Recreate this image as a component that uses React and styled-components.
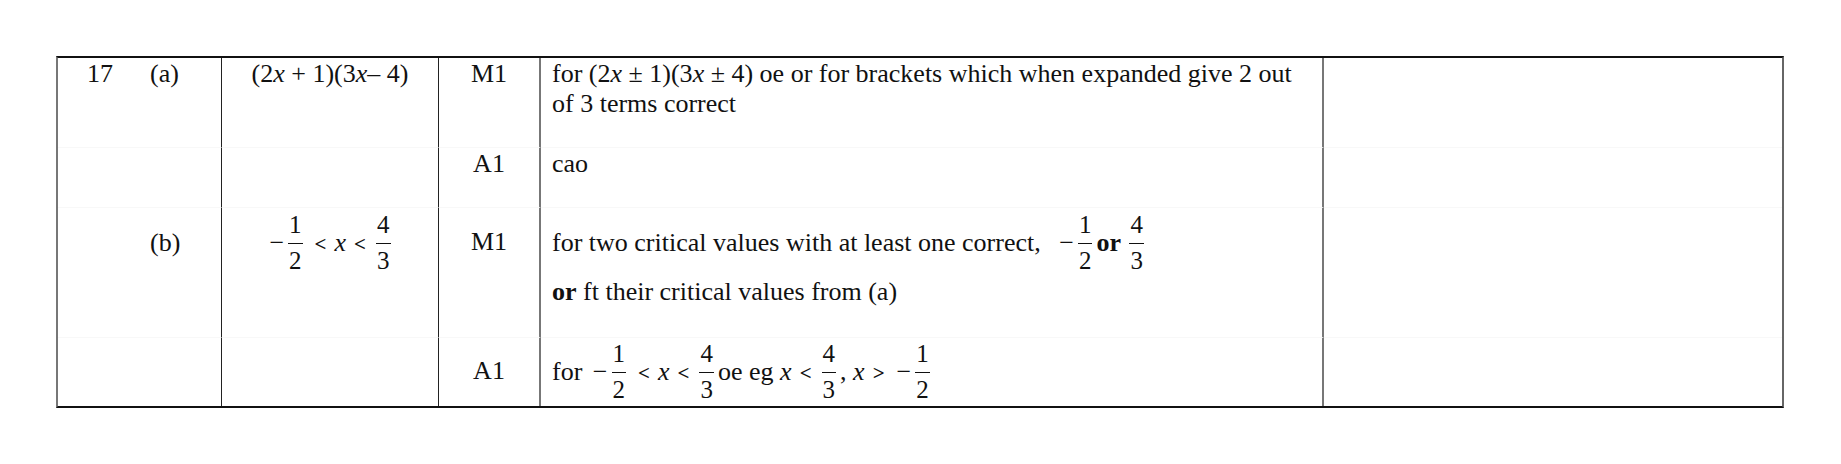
import styled, { createGlobalStyle } from "styled-components";

const GlobalStyle = createGlobalStyle`
  html, body {
    margin: 0;
    padding: 0;
    background: #fff;
  }
  body {
    font-family: "Liberation Serif", "Times New Roman", serif;
    font-size: 26px;
    color: #111;
  }
`;

const Page = styled.div`
  padding: 56px 0 0 56px;
  width: 1841px;
  height: 464px;
  box-sizing: border-box;
`;

const MarkTable = styled.div`
  display: grid;
  grid-template-columns: 164px 217px 102px 783px 458px;
  grid-template-rows: 90px 60px 130px 68px;
  width: max-content;
  border-top: 2px solid #111;
  border-bottom: 2px solid #111;
  border-left: 2px solid #777;
  border-right: 2px solid #666;
`;

const BaseCell = styled.div`
  box-sizing: border-box;
  line-height: 30px;
  padding-top: ${(p) => p.$pt || 1}px;
  border-bottom: ${(p) => (p.$end ? "none" : "1px solid #f8f8f8")};
  white-space: nowrap;
`;

const QuestionCell = styled(BaseCell)`
  display: flex;
  padding-left: 29px;
  border-right: 1px solid #222;
`;

const QNum = styled.span`
  width: 63px;
`;

const AnswerCell = styled(BaseCell)`
  text-align: center;
  border-right: 1px solid #222;
`;

const MarkCell = styled(BaseCell)`
  text-align: center;
  border-right: 2px solid #777;
`;

const NotesCell = styled(BaseCell)`
  padding-left: 11px;
  border-right: 2px solid #777;
`;

const CommentCell = styled(BaseCell)``;

const Line = styled.div`
  margin-top: ${(p) => p.$mt || 0}px;
`;

const V = styled.i`
  font-style: italic;
`;

const Rel = styled.span`
  font-size: 21px;
  font-weight: 700;
  margin: 0 ${(p) => p.$gap || 8}px;
`;

const Minus = styled.span`
  margin: 0 2px 0 ${(p) => p.$ml || 4}px;
`;

const Frac = styled.span`
  display: inline-flex;
  flex-direction: column;
  align-items: center;
  vertical-align: 18px;
  font-size: 25px;
  line-height: 24px;
  margin: 0 4px 0 2px;
`;

const Numer = styled.span`
  padding: 0 1px 6px;
`;

const Bar = styled.span`
  align-self: stretch;
  height: 1px;
  background: #111;
`;

const Denom = styled.span`
  padding: 5px 1px 0;
`;

function Fraction({ n, d }) {
  return (
    <Frac>
      <Numer>{n}</Numer>
      <Bar />
      <Denom>{d}</Denom>
    </Frac>
  );
}

export default function App() {
  return (
    <Page>
      <GlobalStyle />
      <MarkTable>
        {/* 17 (a) method mark */}
        <QuestionCell>
          <QNum>17</QNum>
          <span>(a)</span>
        </QuestionCell>
        <AnswerCell>
          (2<V>x</V> + 1)(3<V>x</V>– 4)
        </AnswerCell>
        <MarkCell>M1</MarkCell>
        <NotesCell>
          for (2<V>x</V> ± 1)(3<V>x</V> ± 4) oe or for brackets which when expanded give 2 out
          <br />
          of 3 terms correct
        </NotesCell>
        <CommentCell />

        {/* 17 (a) accuracy */}
        <QuestionCell />
        <AnswerCell />
        <MarkCell>A1</MarkCell>
        <NotesCell>cao</NotesCell>
        <CommentCell />

        {/* 17 (b) method mark */}
        <QuestionCell $pt={20}>
          <QNum />
          <span>(b)</span>
        </QuestionCell>
        <AnswerCell $pt={5}>
          <Minus>−</Minus>
          <Fraction n="1" d="2" />
          <Rel>&lt;</Rel>
          <V>x</V>
          <Rel>&lt;</Rel>
          <Fraction n="4" d="3" />
        </AnswerCell>
        <MarkCell $pt={19}>M1</MarkCell>
        <NotesCell $pt={5}>
          <Line>
            for two critical values with at least one correct, <Minus $ml={12}>−</Minus>
            <Fraction n="1" d="2" />
            <b>or</b> <Fraction n="4" d="3" />
          </Line>
          <Line $mt={4}>
            <b>or</b> ft their critical values from (a)
          </Line>
        </NotesCell>
        <CommentCell />

        {/* 17 (b) accuracy */}
        <QuestionCell $end />
        <AnswerCell $end />
        <MarkCell $end $pt={18}>
          A1
        </MarkCell>
        <NotesCell $end $pt={4}>
          for <Minus>−</Minus>
          <Fraction n="1" d="2" />
          <Rel>&lt;</Rel>
          <V>x</V>
          <Rel>&lt;</Rel>
          <Fraction n="4" d="3" />
          oe eg <V>x</V>
          <Rel>&lt;</Rel>
          <Fraction n="4" d="3" />, <V>x</V>
          <Rel>&gt;</Rel>
          <Minus>−</Minus>
          <Fraction n="1" d="2" />
        </NotesCell>
        <CommentCell $end />
      </MarkTable>
    </Page>
  );
}
